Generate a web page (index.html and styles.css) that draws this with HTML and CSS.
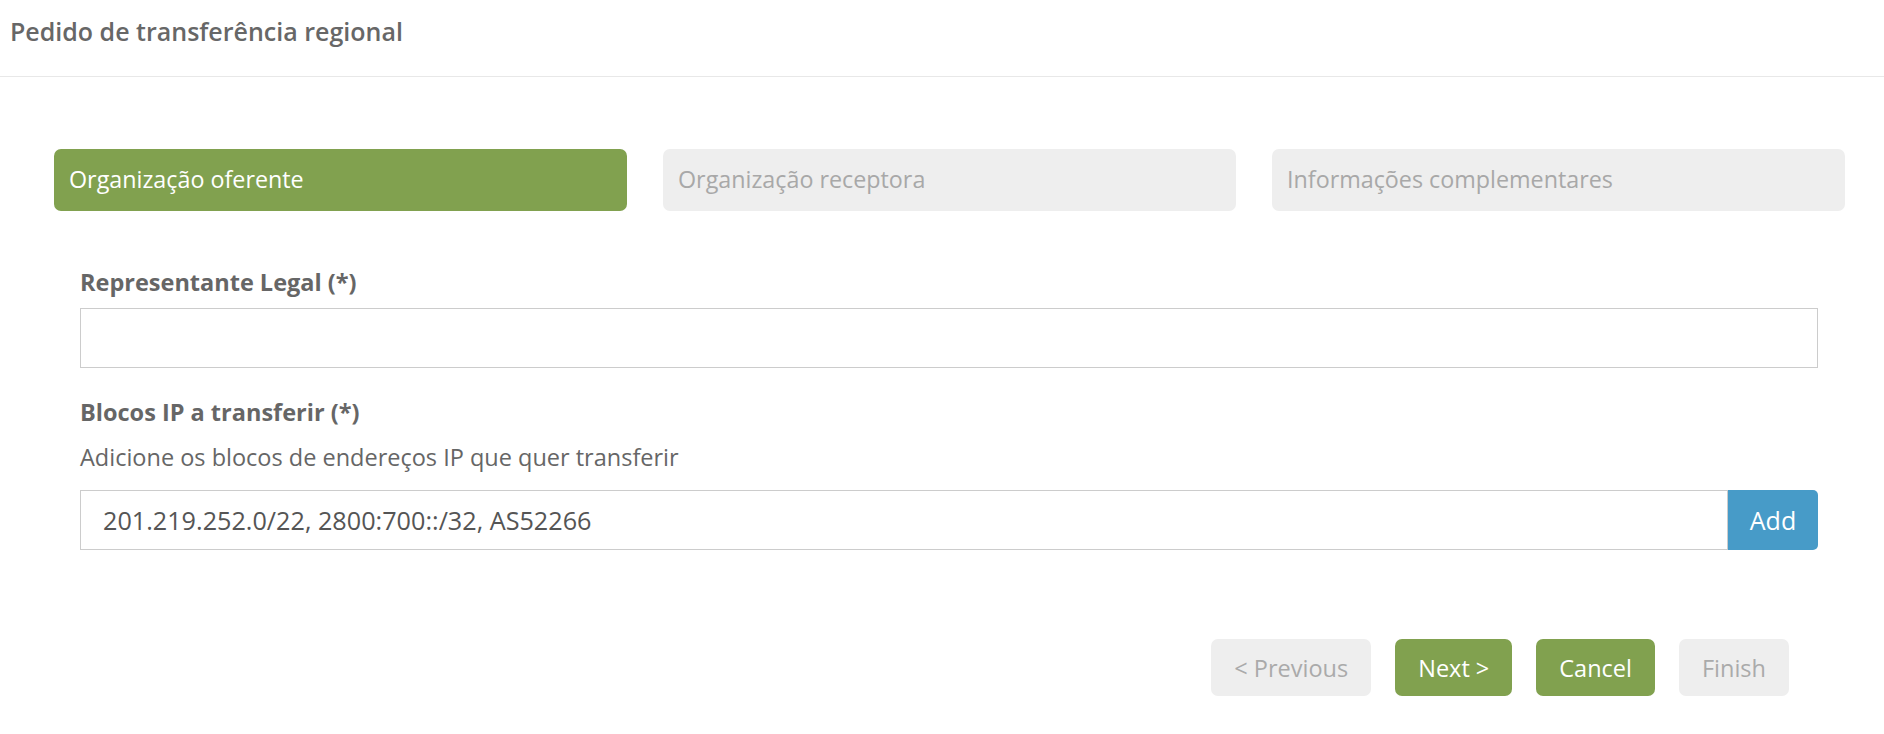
FILE: index.html
```html
<!DOCTYPE html>
<html lang="pt">
<head>
<meta charset="utf-8">
<title>Pedido de transferência regional</title>
<link rel="stylesheet" href="styles.css">
</head>
<body>
<header class="page-header">
  <h1 class="page-title">Pedido de transferência regional</h1>
</header>
<main class="wizard">
  <nav class="steps">
    <div class="step step-active">Organização oferente</div>
    <div class="step">Organização receptora</div>
    <div class="step">Informações complementares</div>
  </nav>
  <section class="form-body">
    <div class="field">
      <label class="field-label">Representante Legal (*)</label>
      <input class="text-input" type="text">
    </div>
    <div class="field field-second">
      <label class="field-label">Blocos IP a transferir (*)</label>
      <p class="help">Adicione os blocos de endereços IP que quer transferir</p>
      <div class="input-group">
        <input class="text-input grouped" type="text" value="201.219.252.0/22, 2800:700::/32, AS52266">
        <button class="btn-add" type="button">Add</button>
      </div>
    </div>
  </section>
  <footer class="actions">
    <button class="btn btn-disabled" type="button">&lt; Previous</button>
    <button class="btn btn-green" type="button">Next &gt;</button>
    <button class="btn btn-green" type="button">Cancel</button>
    <button class="btn btn-disabled" type="button">Finish</button>
  </footer>
</main>
</body>
</html>
```

FILE: styles.css
```css
* { box-sizing: border-box; }
html, body { margin: 0; padding: 0; background: #fff; }
body {
  font-family: "Open Sans", "Liberation Sans", sans-serif;
  color: #666;
}
.page-header {
  height: 77px;
  border-bottom: 1px solid #e8e8e8;
  padding: 13px 10px 0;
}
.page-title {
  margin: 0;
  font-size: 25px;
  font-weight: 600;
  color: #676767;
  line-height: 36px;
}
.wizard {
  padding: 72px 39px 0 54px;
}
.steps {
  display: flex;
  gap: 36px;
}
.step {
  flex: 1;
  height: 62px;
  border-radius: 7px;
  background: #eeeeee;
  color: #a8a8a8;
  font-size: 23.3px;
  line-height: 60px;
  padding-left: 15px;
}
.step-active {
  background: #81a14f;
  color: #fff;
}
.form-body {
  padding: 55px 27px 0 26px;
}
.field { display: flex; flex-direction: column; }
.field-label {
  font-size: 23.5px;
  font-weight: 700;
  color: #666;
  line-height: 32px;
  margin-bottom: 10px;
}
.field-second { margin-top: 28px; }
.field-second .field-label { margin-bottom: 13px; }
.help {
  margin: 0 0 17px;
  font-size: 23.5px;
  line-height: 32px;
  color: #666;
}
.text-input {
  height: 60px;
  border: 1px solid #cccccc;
  border-radius: 0;
  font-family: inherit;
  font-size: 25.2px;
  color: #555;
  padding: 0 22px;
  outline: none;
  background: #fff;
}
.input-group { display: flex; }
.grouped { flex: 1; }
.btn-add {
  width: 90px;
  height: 60px;
  border: none;
  border-radius: 0 5px 5px 0;
  background: #479bc8;
  color: #fff;
  font-family: inherit;
  font-size: 25px;
}
.actions {
  display: flex;
  justify-content: flex-end;
  gap: 24px;
  padding: 89px 56px 0 0;
}
.btn {
  height: 57px;
  border: none;
  border-radius: 7px;
  font-family: inherit;
  font-size: 23.5px;
  padding: 0 23px;
}
.btn-disabled { background: #eeeeee; color: #aaaaaa; }
.btn-green { background: #81a14f; color: #fff; }
```
